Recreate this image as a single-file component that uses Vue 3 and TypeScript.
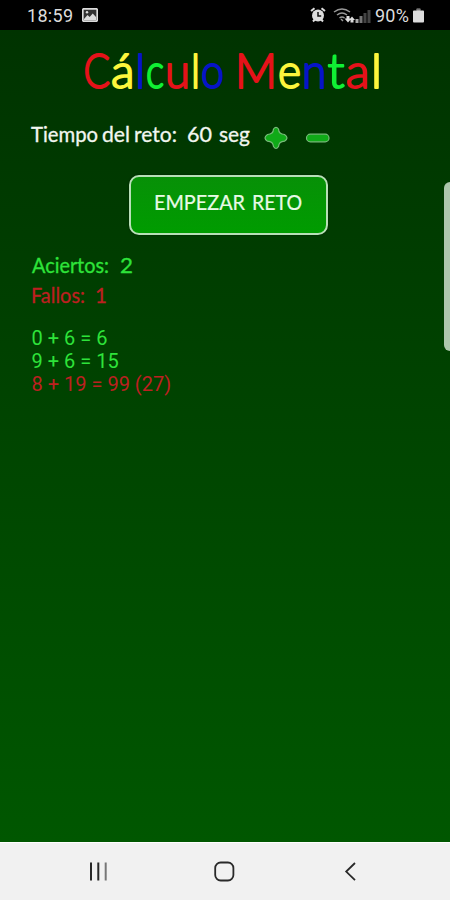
<script setup lang="ts">
interface Piece { t: string; x: number; w: number; c?: string }

const red = '#e5121a'
const yellow = '#fdf63c'
const blue = '#0714c8'
const green = '#10f034'

const title: Piece[] = [
  { t: 'C', x: 83.5, w: 26.5, c: red },
  { t: 'á', x: 111, w: 23.5, c: yellow },
  { t: 'l', x: 135.5, w: 9.5, c: blue },
  { t: 'c', x: 146, w: 18, c: green },
  { t: 'u', x: 165, w: 25, c: red },
  { t: 'l', x: 191, w: 9, c: yellow },
  { t: 'o', x: 201, w: 23, c: blue },
  { t: 'M', x: 235, w: 42, c: red },
  { t: 'e', x: 278, w: 23, c: yellow },
  { t: 'n', x: 302, w: 24.5, c: blue },
  { t: 't', x: 327.5, w: 17, c: green },
  { t: 'a', x: 346, w: 24, c: red },
  { t: 'l', x: 371, w: 11, c: yellow },
]
const timeLabel: Piece[] = [
  { t: 'Tiempo', x: 31, w: 67 },
  { t: 'del', x: 102, w: 28 },
  { t: 'reto:', x: 134, w: 43 },
  { t: '60', x: 187, w: 25 },
  { t: 'seg', x: 219, w: 31 },
]
const hits: Piece[] = [{ t: 'Aciertos:', x: 32, w: 77 }, { t: '2', x: 120, w: 13 }]
const misses: Piece[] = [{ t: 'Fallos:', x: 31, w: 54 }, { t: '1', x: 95, w: 12 }]
const results = [
  { text: '0 + 6 = 6', ok: true },
  { text: '9 + 6 = 15', ok: true },
  { text: '8 + 19 = 99 (27)', ok: false },
]
</script>

<template>
  <div class="phone">
    <header class="status">
      <span class="clock">18:59</span>
      <svg class="picture" width="16" height="14" viewBox="0 0 16 14">
        <rect x=".8" y=".8" width="14.4" height="12.4" rx="1" fill="#333" stroke="#ddd" stroke-width="1.7" />
        <path d="M2 11l3.5-4 2.2 2 3-3.5L14 9v3H2z" fill="#ddd" />
        <circle cx="5" cy="4.2" r="1.2" fill="#ddd" />
      </svg>
      <svg class="signals" width="62" height="18" viewBox="0 0 62 18">
        <g stroke="#ddd" fill="none">
          <path d="M1 5L4.5 2.3M15 5L11.5 2.3M3 15.5l1.8-2M13 15.5l-1.8-2" stroke-width="2" />
          <circle cx="8" cy="9.5" r="6" fill="#ddd" stroke="none" />
          <path d="M8 6v4h3.2" stroke="#111" stroke-width="1.5" />
        </g>
        <g fill="none" stroke="#999" stroke-width="1.5">
          <path d="M24 6q8-6 16 0M27 9q5-4 10 0M29.5 12q2.5-2 5 0" />
          <path d="M31 13l2 2" />
        </g>
        <path d="M36.5 10h3v2.5h2L38 16.5l-3.5-4h2zM42 10.5l3 3.5h-1.5v2.5h-3V14H39z" fill="#ddd" />
        <path d="M45.5 13h3v4h-3z" fill="#aaa" />
        <path d="M49.5 10h3v7h-3z" fill="#777" />
        <path d="M53.5 7h3v10h-3zM57.5 4h3v13h-3z" fill="#444" />
      </svg>
      <span class="percent">90%</span>
      <svg class="battery" width="11" height="15" viewBox="0 0 12 15">
        <path d="M4 0h4v2h3q1 0 1 1v11q0 1-1 1H1q-1 0-1-1V3q0-1 1-1h3z" fill="#ddd" />
        <path d="M4 0h4v2H4z" fill="#777" />
      </svg>
    </header>

    <main class="screen">
      <svg class="line title" width="450" height="65">
        <text
          v-for="(p, i) in title" :key="i" :x="p.x" y="57.5" :textLength="p.w"
          lengthAdjust="spacingAndGlyphs" :fill="p.c" :stroke="p.c"
        >{{ p.t }}</text>
      </svg>

      <div class="time">
        <svg class="line words" width="256" height="36">
          <text
            v-for="p in timeLabel" :key="p.t" :x="p.x" y="22" :textLength="p.w"
            lengthAdjust="spacingAndGlyphs"
          >{{ p.t }}</text>
        </svg>
        <svg class="adjust" width="76" height="28" viewBox="0 0 76 28">
          <g fill="#10aa18" stroke="#76bb78" stroke-width="1.2" stroke-linejoin="round">
            <path d="M17.5 5Q20 1.8 22.5 5Q22.7 10.3 28.5 10.5Q33.5 14 28.5 17.2Q23 17.5 22.5 22.5Q20 26.5 17.5 22.5Q17 17.5 11.5 17.2Q6.5 14 11.5 10.5Q17.3 10.3 17.5 5Z" />
            <rect x="50.5" y="10.2" width="22.5" height="7.6" rx="3.8" />
          </g>
        </svg>
      </div>

      <button class="start">
        <svg class="line caption" width="194" height="54">
          <text x="23" y="32" textLength="91" lengthAdjust="spacingAndGlyphs">EMPEZAR</text>
          <text x="121" y="32" textLength="50" lengthAdjust="spacingAndGlyphs">RETO</text>
        </svg>
      </button>

      <svg class="line words score good" width="300" height="30">
        <text v-for="p in hits" :key="p.t" :x="p.x" y="23" :textLength="p.w" lengthAdjust="spacingAndGlyphs">{{ p.t }}</text>
      </svg>
      <svg class="line words score bad" width="300" height="30">
        <text v-for="p in misses" :key="p.t" :x="p.x" y="23" :textLength="p.w" lengthAdjust="spacingAndGlyphs">{{ p.t }}</text>
      </svg>

      <ul class="results">
        <li v-for="r in results" :key="r.text" :class="r.ok ? 'good' : 'bad'">{{ r.text }}</li>
      </ul>
      <div class="edge"></div>
    </main>

    <nav class="nav">
      <svg width="450" height="57" viewBox="0 0 450 57">
        <g fill="none" stroke="#292929" stroke-width="2">
          <path d="M91 19.5v18M98.3 19.5v18" />
          <path d="M105.7 19.5v18" stroke="#777" />
          <rect x="215.2" y="19.5" width="18.2" height="18" rx="5.5" stroke-width="1.8" />
          <path d="M355 20l-8.8 8.6 8.8 8.6" stroke-width="1.8" />
        </g>
      </svg>
    </nav>
  </div>
</template>

<style>
body { margin: 0; }
</style>

<style scoped>
.phone {
  width: 450px;
  height: 900px;
  display: flex;
  flex-direction: column;
  overflow: hidden;
  font-family: Roboto, sans-serif;
}
.status {
  height: 30px;
  flex: none;
  display: flex;
  align-items: center;
  background: #000;
  color: #ddd;
  font-size: 18px;
}
.clock { margin-left: 27px; width: 55px; letter-spacing: .3px; }
.signals { margin-left: 212px; }
.percent { width: 36px; margin-left: 3px; letter-spacing: .2px; }
.battery { margin-left: 2px; margin-top: 1px; }
.screen {
  flex: 1;
  position: relative;
  display: flex;
  flex-direction: column;
  background: linear-gradient(#003300, #005700);
}
.line {
  display: block;
  flex: none;
  font-family: Lato, sans-serif;
}
.title {
  height: 75px;
  font-size: 47px;
  font-weight: 300;
  stroke-width: 2px;
  stroke-linejoin: round;
}
.time { display: flex; height: 40px; margin-top: 15px; }
.words { font-size: 21px; fill: #f2f6f0; stroke: #f2f6f0; stroke-width: .3px; }
.adjust { margin-top: 4px; }
.start {
  width: 199px;
  height: 60px;
  padding: 0;
  margin: 15px 0 0 129px;
  box-sizing: border-box;
  border: 2px solid #b8dfb7;
  border-radius: 10px;
  background: linear-gradient(#079007, #009c00);
  box-shadow: 0 0 2px #001800;
}
.caption { font-size: 21px; fill: #e8fae6; stroke: #e8fae6; stroke-width: .2px; }
.start + .score { margin-top: 15px; }
.words.good { fill: #2ee33a; stroke: #2ee33a; }
.words.bad { fill: #bd2020; stroke: #bd2020; }
.results {
  list-style: none;
  margin: 17px 0 0 31.5px;
  padding: 0;
  font-size: 20px;
  line-height: 23px;
}
.results .good { color: #2ee33a; }
.results .bad { color: #bd2020; }
.edge {
  position: absolute;
  right: 0;
  top: 152px;
  width: 6px;
  height: 169px;
  border-radius: 6px 0 0 6px;
  background: #adc7ad;
}
.nav {
  flex: none;
  height: 57px;
  border-top: 1px solid #fff;
  background: #f1f1f1;
}
</style>
